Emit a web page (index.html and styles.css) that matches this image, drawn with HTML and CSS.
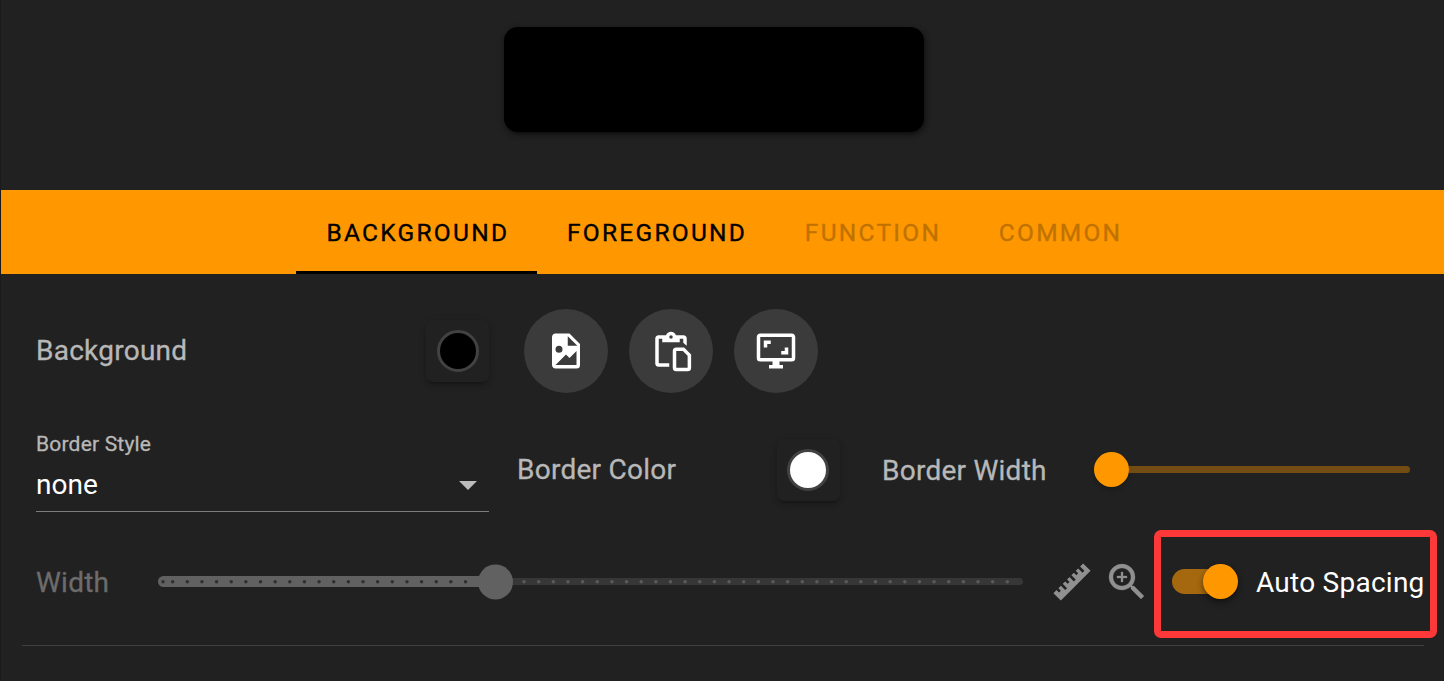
FILE: index.html
```html
<!DOCTYPE html>
<html lang="en">
<head>
<meta charset="utf-8">
<title>Style editor</title>
<link rel="stylesheet" href="styles.css">
</head>
<body>
<div class="dialog">
  <div class="preview"><div class="preview-key"></div></div>
  <nav class="tabs">
    <div class="tab active">BACKGROUND</div>
    <div class="tab">FOREGROUND</div>
    <div class="tab disabled">FUNCTION</div>
    <div class="tab disabled">COMMON</div>
  </nav>
  <div class="panel">
    <div class="row row-background">
      <span class="label label-background">Background</span>
      <div class="swatch"><div class="dot black"></div></div>
      <div class="buttons">
        <button class="round"><svg viewBox="0 0 24 24"><path d="M13,9H18.5L13,3.5V9M6,2H14L20,8V20A2,2 0 0,1 18,22H6C4.89,22 4,21.1 4,20V4C4,2.89 4.89,2 6,2M6,20H15L18,20V12L14,16L12,14L6,20M8,9A2,2 0 0,0 6,11A2,2 0 0,0 8,13A2,2 0 0,0 10,11A2,2 0 0,0 8,9Z"/></svg></button>
        <button class="round"><svg viewBox="0 0 24 24"><path fill-rule="evenodd" d="M11 21H5A2 2 0 0 1 3 19V5A2 2 0 0 1 5 3H9.18C9.6 1.84 10.7 1 12 1S14.4 1.84 14.82 3H19A2 2 0 0 1 21 5V9L19 7.3V5H17V7H7V5H5V19H11ZM12 3A1 1 0 0 0 12 5A1 1 0 0 0 12 3ZM15 10H19.5L23.5 14V21.5A2 2 0 0 1 21.5 23.5H15A2 2 0 0 1 13 21.5V12A2 2 0 0 1 15 10ZM15 12V21.5H21.5V14.7L18.8 12Z"/></svg></button>
        <button class="round"><svg viewBox="0 0 24 24"><path d="M9,6H5V10H7V8H9V6M19,10H17V12H15V14H19V10M21,16H3V4H21M21,2H3C1.89,2 1,2.89 1,4V16A2,2 0 0,0 3,18H10V20H8V22H16V20H14V18H21A2,2 0 0,0 23,16V4C23,2.89 22.1,2 21,2"/></svg></button>
      </div>
    </div>
    <div class="row row-border">
      <div class="select">
        <span class="select-label">Border Style</span>
        <div class="select-value"><span>none</span><svg class="caret" viewBox="0 0 18 9"><path d="M0 0H18L9 9Z"/></svg></div>
      </div>
      <span class="label label-color">Border Color</span>
      <div class="swatch"><div class="dot white"></div></div>
      <span class="label label-border-width">Border Width</span>
      <div class="slider"><div class="thumb"></div><div class="rail"></div></div>
    </div>
    <div class="row row-width">
      <span class="label label-width">Width</span>
      <svg class="stepped" viewBox="0 0 866 42">
        <rect class="rest" x="338" y="17" width="527" height="7" rx="3.5"/>
        <rect class="filled" y="15" width="340" height="11" rx="5.5"/>
        <path class="ticks" d="M5 20.7H5.01M14.64 20.7H322"/>
        <path class="ticks rest-ticks" d="M351.4 20.7H862"/>
        <circle class="filled" cx="337.5" cy="21" r="17.5"/>
      </svg>
      <svg class="ruler" viewBox="0 0 24 24"><path d="M1.39,18.36L3.16,16.6L4.58,18L5.64,16.95L4.22,15.54L5.64,14.12L8.11,16.6L9.17,15.54L6.7,13.06L8.11,11.65L9.53,13.06L10.59,12L9.17,10.59L10.59,9.17L13.06,11.65L14.12,10.59L11.65,8.11L13.06,6.7L14.47,8.11L15.54,7.05L14.12,5.64L15.54,4.22L18,6.7L19.07,5.64L16.6,3.16L18.36,1.39L22.61,5.64L5.64,22.61L1.39,18.36Z"/></svg>
      <svg class="magnify" viewBox="3 3 18 18"><path d="M15.5,14L20.5,19L19,20.5L14,15.5V14.71L13.73,14.43C12.59,15.41 11.11,16 9.5,16A6.5,6.5 0 0,1 3,9.5A6.5,6.5 0 0,1 9.5,3A6.5,6.5 0 0,1 16,9.5C16,11.11 15.41,12.59 14.43,13.73L14.71,14H15.5M9.5,14C12,14 14,12 14,9.5C14,7 12,5 9.5,5C7,5 5,7 5,9.5C5,12 7,14 9.5,14M12,10H10V12H9V10H7V9H9V7H10V9H12V10Z"/></svg>
      <div class="spacing">
        <div class="switch"><div class="knob"></div></div>
        <span class="spacing-label">Auto Spacing</span>
      </div>
    </div>
    <hr class="divider">
  </div>
</div>
</body>
</html>
```
FILE: styles.css
```css
* { box-sizing: border-box; }
body {
  margin: 0;
  height: 681px;
  overflow: hidden;
  background: #212121;
  color: #fff;
  font: 28px/42px Roboto, sans-serif;
}
.dialog { height: 681px; border-left: 1px solid #1a1a1a; }
.preview { height: 190px; padding: 27px 0 0 503px; }
.preview-key {
  width: 420px;
  height: 105px;
  border-radius: 14px;
  background: #000;
  box-shadow: 0 5px 2px -4px rgba(0,0,0,.2), 0 3px 4px rgba(0,0,0,.14), 0 2px 9px rgba(0,0,0,.12), 2px 2px 5px rgba(0,0,0,.3);
}
.tabs { display: flex; height: 84px; padding-left: 295px; background: #ff9800; }
.tab {
  padding: 1px 27.3px 0 30.4px;
  color: #000;
  font-size: 24.5px;
  font-weight: 430;
  line-height: 84px;
  letter-spacing: 2.27px;
  -webkit-text-stroke: .35px currentColor;
}
.tab.active { border-bottom: 3px solid #000; }
.tab.disabled { color: #bf7200; }
.panel { padding-left: 21px; }
.row { display: flex; align-items: center; padding-left: 14px; }
.row-background { height: 154px; }
.label { color: #b8b8b8; white-space: nowrap; letter-spacing: .25px; -webkit-text-stroke: .3px currentColor; }
.label-background { width: 390px; }
.swatch {
  display: flex;
  align-items: center;
  justify-content: center;
  width: 63px;
  height: 62px;
  border-radius: 7px;
  box-shadow: 0 5px 2px -4px rgba(0,0,0,.2), 0 3px 4px rgba(0,0,0,.14), 0 2px 9px rgba(0,0,0,.12);
}
.dot { width: 42px; height: 42px; border: 3px solid #424242; border-radius: 50%; }
.black { background: #000; }
.white { background: #fff; }
.buttons { display: flex; gap: 21px; margin-left: 35px; }
.round {
  display: grid;
  place-items: center;
  width: 84px;
  height: 84px;
  padding: 0;
  border: 0;
  border-radius: 50%;
  background: #3b3b3b;
}
.round svg { width: 42px; height: 42px; fill: #fff; }
.row-border { height: 84px; }
.select { width: 453px; height: 84px; border-bottom: 1px solid #7d7d7d; }
.select-label { display: block; height: 33px; color: #b8b8b8; font-size: 21px; line-height: 32px; letter-spacing: .2px; -webkit-text-stroke: .3px currentColor; }
.select-value { display: flex; align-items: center; justify-content: space-between; height: 48px; padding-right: 12px; }
.caret { width: 18px; height: 9px; fill: #bcbcbc; }
.label-color { width: 259.5px; margin-left: 28px; }
.label-border-width { width: 212px; margin-left: 42.5px; padding-top: 1px; }
.slider { display: flex; align-items: center; margin-bottom: 1px; }
.thumb { width: 35px; height: 35px; border-radius: 50%; background: #ff9800; box-shadow: 0 3px 4px rgba(0,0,0,.2); }
.rail { width: 281px; height: 7px; border-radius: 0 3.5px 3.5px 0; background: #734c13; }
.row-width { height: 106px; padding-top: 34px; }
.label-width { width: 122px; padding-top: 2px; color: #6c6c6c; }
.stepped { flex: none; width: 866px; height: 42px; }
.filled { fill: #616161; }
.rest { fill: #373737; }
.ticks { fill: none; stroke: #303030; stroke-width: 3.5; stroke-linecap: round; stroke-dasharray: 0 14.644; }
.rest-ticks { stroke: #5b5b5b; }
.ruler { flex: none; width: 42px; height: 42px; margin-left: 27px; fill: #909090; }
.magnify { flex: none; width: 36px; height: 36px; margin-left: 16px; fill: #909090; stroke: #909090; stroke-width: .15; overflow: visible; }
.spacing {
  display: flex;
  flex: none;
  align-items: center;
  width: 283px;
  height: 108px;
  margin: 0 0 -3px 8.5px;
  padding: 0 0 4px 11px;
  border: 7px solid #fc3838;
  border-radius: 7px;
  white-space: nowrap;
}
.switch { display: flex; flex: none; align-items: center; justify-content: flex-end; width: 66.5px; height: 25px; margin-right: 18px; border-radius: 12.5px; background: linear-gradient(90deg, #a5680f 50px, transparent 50px); }
.knob { width: 35px; height: 35px; flex: none; border-radius: 50%; background: #ff9800; box-shadow: 0 4px 7px rgba(0,0,0,.3), 0 2px 4px rgba(0,0,0,.2); }
.spacing-label { padding-top: 3px; letter-spacing: .25px; }
.divider { width: 1402px; height: 1px; margin: 27px 0 0; border: 0; background: #404040; }
```
